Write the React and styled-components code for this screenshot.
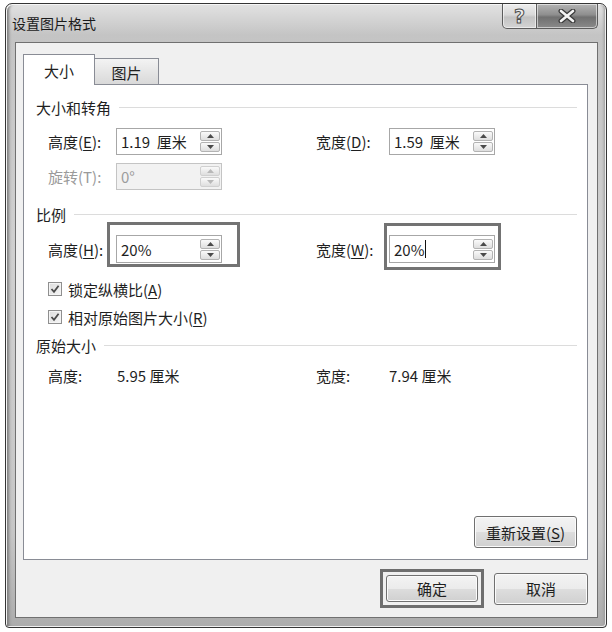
import React from "react";
import styled, { createGlobalStyle } from "styled-components";

const GlobalStyle = createGlobalStyle`
  body {
    margin: 0;
    background: #ffffff;
    font-family: "Noto Sans CJK SC", "Noto Sans", sans-serif;
    color: #1f1f1f;
  }
`;

const Window = styled.div`
  box-sizing: border-box;
  width: 602px;
  height: 625px;
  margin: 3px 0 0 5px;
  border: 1px solid #353535;
  border-radius: 7px 7px 4px 4px;
  background: linear-gradient(180deg, #e2e2e2 0%, #c4c4c4 5%, #d0d0d0 40%, #c6c6c6 85%, #acacac 100%);
  box-shadow: inset 1px 1px 0 #f6f6f6, inset -1px -1px 0 #efefef, inset 5px 0 3px -2px #7e7e7e,
    inset -4px 0 3px -2px #9a9a9a;
  padding-bottom: 9px;
  display: flex;
  flex-direction: column;
`;

const TitleBar = styled.div`
  height: 38px;
  display: flex;
  align-items: flex-start;
  padding: 0 8px 0 6px;
`;

const Title = styled.div`
  flex: 1;
  line-height: 38px;
  font-size: 14px;
  color: #1a1a1a;
`;

const CaptionBtn = styled.div`
  box-sizing: border-box;
  width: ${(p) => p.$w}px;
  height: 25px;
  display: flex;
  align-items: center;
  justify-content: center;
  border: 1px solid #5c5c5c;
  border-top: none;
  border-radius: ${(p) => (p.$first ? "0 0 0 5px" : "0 0 5px 0")};
  background: ${(p) =>
    p.$dark
      ? "linear-gradient(180deg, #b4b4b4 0%, #8e8e8e 45%, #707070 55%, #8a8a8a 100%)"
      : "linear-gradient(180deg, #eeeeee 0%, #d8d8d8 45%, #c2c2c2 55%, #d4d4d4 100%)"};
  box-shadow: inset 0 0 0 1px rgba(255, 255, 255, 0.55);
  & + & {
    border-left: none;
  }
`;

const HelpGlyph = styled.span`
  font-family: "DejaVu Sans", sans-serif;
  font-size: 19px;
  font-weight: bold;
  color: #ededed;
  -webkit-text-stroke: 1px #4d4d4d;
  line-height: 1;
`;

const Client = styled.div`
  flex: 1;
  margin: 0 8px 0 9px;
  border: 1px solid #707070;
  background: #f0f0f0;
  padding: 11px 9px 0 7px;
  display: flex;
  flex-direction: column;
`;

const Tabs = styled.div`
  display: flex;
  align-items: flex-end;
  height: 31px;
  margin-bottom: -1px;
  position: relative;
  z-index: 1;
`;

const Tab = styled.div`
  box-sizing: border-box;
  width: ${(p) => (p.$active ? 72 : 64)}px;
  height: ${(p) => (p.$active ? 31 : 26)}px;
  margin-bottom: ${(p) => (p.$active ? 0 : 1)}px;
  border: 1px solid #898c95;
  border-bottom: none;
  border-left: ${(p) => (p.$active ? "1px solid #898c95" : "none")};
  background: ${(p) =>
    p.$active ? "#ffffff" : "linear-gradient(180deg, #f3f3f3 0%, #e6e6e6 50%, #d9d9d9 100%)"};
  display: flex;
  align-items: center;
  justify-content: center;
  font-size: 15px;
  padding-top: ${(p) => (p.$active ? 0 : 2)}px;
`;

const Panel = styled.div`
  flex: 1;
  background: #ffffff;
  border: 1px solid #898c95;
  padding: 12px 10px 11px 12px;
  display: flex;
  flex-direction: column;
`;

const Header = styled.div`
  display: flex;
  align-items: center;
  gap: 8px;
  height: 20px;
  font-size: 15px;
  margin-top: ${(p) => p.$mt || 0}px;
  &::after {
    content: "";
    flex: 1;
    height: 1px;
    background: #dcdcdc;
  }
`;

const Row = styled.div`
  display: grid;
  grid-template-columns: 268px auto;
  padding-left: 12px;
  margin-top: ${(p) => p.$mt}px;
  min-height: 20px;
`;

const Field = styled.div`
  display: flex;
  align-items: center;
`;

const Label = styled.div`
  width: ${(p) => p.$w}px;
  font-size: 15px;
  color: ${(p) => (p.$disabled ? "#9a9a9a" : "#1f1f1f")};
  white-space: nowrap;
  u {
    text-decoration-thickness: 1px;
    text-underline-offset: 2px;
  }
`;

const Value = styled.div`
  font-size: 15px;
`;

const InputBox = styled.div`
  position: relative;
  box-sizing: border-box;
  width: 106px;
  height: ${(p) => p.$h || 27}px;
  border: 1px solid ${(p) => (p.$disabled ? "#c4c4c4" : "#a7a7a7")};
  background: ${(p) => (p.$disabled ? "#f2f2f2" : "#ffffff")};
  color: ${(p) => (p.$disabled ? "#9c9c9c" : "#1f1f1f")};
  display: flex;
  align-items: center;
  padding-left: 4px;
  font-size: 15px;
  white-space: pre;
`;

const Caret = styled.span`
  display: inline-block;
  width: 1px;
  height: 18px;
  background: #111;
  margin-left: 1px;
  vertical-align: middle;
`;

const Spinner = styled.div`
  margin-left: auto;
  margin-right: 1px;
  width: 20px;
  display: flex;
  flex-direction: column;
  gap: 1px;
`;

const SpinBtn = styled.div`
  box-sizing: border-box;
  height: 10px;
  border: 1px solid ${(p) => (p.$disabled ? "#d0d0d0" : "#b3b3b3")};
  border-radius: 2px;
  background: linear-gradient(180deg, #fafafa 0%, #ececec 50%, #dedede 100%);
  display: flex;
  align-items: center;
  justify-content: center;
  svg {
    display: block;
  }
`;

const Mark = styled.div`
  position: absolute;
  top: ${(p) => p.$t}px;
  left: ${(p) => p.$l}px;
  right: ${(p) => p.$r}px;
  bottom: ${(p) => p.$b}px;
  border: 3px solid #737373;
  pointer-events: none;
`;

const CheckRow = styled.label`
  display: flex;
  align-items: center;
  gap: 6px;
  height: 20px;
  padding-left: 12px;
  margin-top: ${(p) => p.$mt}px;
  font-size: 15px;
  u {
    text-underline-offset: 2px;
  }
`;

const CheckBox = styled.span`
  box-sizing: border-box;
  width: 14px;
  height: 14px;
  border: 1px solid #8f8f8f;
  background: linear-gradient(135deg, #dcdcdc 0%, #f6f6f6 100%);
  box-shadow: inset 0 0 0 1px #f4f4f4;
  display: flex;
  align-items: center;
  justify-content: center;
`;

const Button = styled.div`
  box-sizing: border-box;
  width: ${(p) => p.$w}px;
  height: ${(p) => p.$h}px;
  border: 1px solid #707070;
  border-radius: 3px;
  background: linear-gradient(180deg, #f3f3f3 0%, #ebebeb 50%, #dddddd 51%, #d0d0d0 100%);
  box-shadow: inset 0 0 0 1px #fbfbfb;
  display: flex;
  align-items: center;
  justify-content: center;
  font-size: 15px;
  color: #1f1f1f;
  u {
    text-underline-offset: 2px;
  }
`;

const ResetButton = styled(Button)`
  margin-top: auto;
  align-self: flex-end;
`;

const Footer = styled.div`
  height: 57px;
  display: flex;
  align-items: center;
  justify-content: flex-end;
  gap: 10px;
`;

const DefaultFrame = styled.div`
  border: 3px solid #6e6e6e;
  padding: 3px;
`;

const Arrow = ({ up, disabled }) => (
  <svg width="7" height="4" viewBox="0 0 7 4">
    <path
      d={up ? "M0 4 L3.5 0 L7 4 Z" : "M0 0 L3.5 4 L7 0 Z"}
      fill={disabled ? "#b8b8b8" : "#4a4a4a"}
    />
  </svg>
);

const Spin = ({ disabled }) => (
  <Spinner>
    <SpinBtn $disabled={disabled}>
      <Arrow up disabled={disabled} />
    </SpinBtn>
    <SpinBtn $disabled={disabled}>
      <Arrow disabled={disabled} />
    </SpinBtn>
  </Spinner>
);

const Check = () => (
  <CheckBox>
    <svg width="10" height="10" viewBox="0 0 10 10">
      <path d="M1.5 5 L4 7.8 L8.6 1.8" stroke="#4a4a4a" strokeWidth="1.8" fill="none" />
    </svg>
  </CheckBox>
);

export default function App() {
  return (
    <>
      <GlobalStyle />
      <Window>
        <TitleBar>
          <Title>设置图片格式</Title>
          <CaptionBtn $w={35} $first>
            <HelpGlyph>?</HelpGlyph>
          </CaptionBtn>
          <CaptionBtn $w={61} $dark>
            <svg width="18" height="14" viewBox="0 0 18 14">
              <path d="M3 2 L15 12 M15 2 L3 12" stroke="#3a3a3a" strokeWidth="5" strokeLinecap="round" />
              <path d="M3 2 L15 12 M15 2 L3 12" stroke="#f4f4f4" strokeWidth="2.6" strokeLinecap="round" />
            </svg>
          </CaptionBtn>
        </TitleBar>

        <Client>
          <Tabs>
            <Tab $active>大小</Tab>
            <Tab>图片</Tab>
          </Tabs>

          <Panel>
            <Header>大小和转角</Header>
            <Row $mt={11}>
              <Field>
                <Label $w={68}>
                  高度(<u>E</u>):
                </Label>
                <InputBox>
                  1.19  厘米
                  <Spin />
                </InputBox>
              </Field>
              <Field>
                <Label $w={73}>
                  宽度(<u>D</u>):
                </Label>
                <InputBox>
                  1.59  厘米
                  <Spin />
                </InputBox>
              </Field>
            </Row>
            <Row $mt={8}>
              <Field>
                <Label $w={68} $disabled>
                  旋转(T):
                </Label>
                <InputBox $disabled>
                  0°
                  <Spin disabled />
                </InputBox>
              </Field>
            </Row>

            <Header $mt={14}>比例</Header>
            <Row $mt={11}>
              <Field>
                <Label $w={68}>
                  高度(<u>H</u>):
                </Label>
                <InputBox $h={28}>
                  20%
                  <Spin />
                  <Mark $t={-14} $l={-10} $r={-19} $b={-5} />
                </InputBox>
              </Field>
              <Field>
                <Label $w={73}>
                  宽度(<u>W</u>):
                </Label>
                <InputBox $h={28}>
                  20%
                  <Caret />
                  <Spin />
                  <Mark $t={-13} $l={-6} $r={-7} $b={-8} />
                </InputBox>
              </Field>
            </Row>

            <CheckRow $mt={16}>
              <Check />
              <span>
                锁定纵横比(<u>A</u>)
              </span>
            </CheckRow>
            <CheckRow $mt={8}>
              <Check />
              <span>
                相对原始图片大小(<u>R</u>)
              </span>
            </CheckRow>

            <Header $mt={8}>原始大小</Header>
            <Row $mt={10}>
              <Field>
                <Label $w={69}>高度:</Label>
                <Value>5.95 厘米</Value>
              </Field>
              <Field>
                <Label $w={73}>宽度:</Label>
                <Value>7.94 厘米</Value>
              </Field>
            </Row>

            <ResetButton $w={103} $h={32}>
              重新设置(<u>S</u>)
            </ResetButton>
          </Panel>

          <Footer>
            <DefaultFrame>
              <Button $w={92} $h={27}>确定</Button>
            </DefaultFrame>
            <Button $w={94} $h={32}>取消</Button>
          </Footer>
        </Client>
      </Window>
    </>
  );
}
